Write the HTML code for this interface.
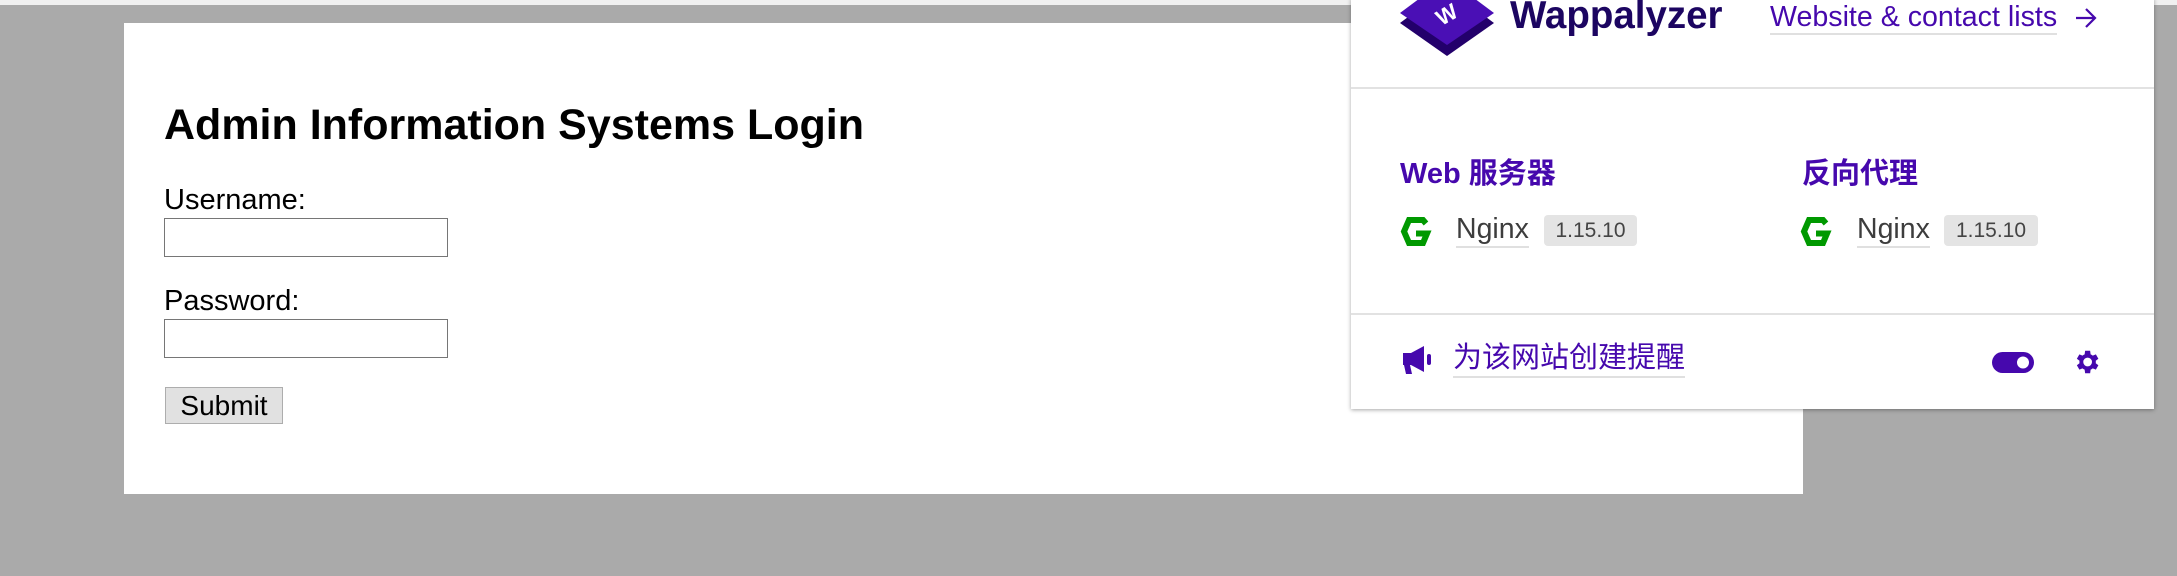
<!DOCTYPE html>
<html><head><meta charset="utf-8"><style>
body{margin:0;width:2177px;height:576px;background:#aaaaaa;position:relative;overflow:hidden;font-family:"Liberation Sans","Noto Sans CJK SC",sans-serif}
.top{position:absolute;left:0;top:0;width:2177px;height:5px;background:#f0f0f0}
.card{position:absolute;left:124px;top:23px;width:1679px;height:471px;background:#fff}
.a{position:absolute;white-space:nowrap}
h1{margin:0;position:absolute;left:164px;top:101px;font-size:43px;font-weight:bold;color:#000;white-space:nowrap}
.lbl{font-size:29px;color:#000}
.inp{position:absolute;left:164px;width:282px;height:37px;border:1px solid #767676;background:#fff}
.btn{position:absolute;left:165px;top:387px;width:116px;height:35px;border:1px solid #adadad;background:#e1e1e1;font-size:28px;text-align:center;line-height:35px}
.pop{position:absolute;left:1351px;top:-2px;width:803px;height:411px;background:#fff;box-shadow:0 1px 4px rgba(0,0,0,.35)}
.hr{position:absolute;left:1351px;width:803px;height:2px;background:#e2e2e2}
.pur{color:#4608ad}
.ul{border-bottom:2px solid #e0e0e0}
.badge{position:absolute;height:31px;background:#e4e4e4;border-radius:4px;font-size:21px;color:#444;line-height:31px;text-align:center}
</style></head><body>
<div class="top"></div>
<div class="card"></div>
<h1>Admin Information Systems Login</h1>
<div class="a lbl" style="left:164px;top:184px">Username:</div>
<div class="inp" style="top:218px"></div>
<div class="a lbl" style="left:164px;top:285px">Password:</div>
<div class="inp" style="top:319px"></div>
<div class="btn">Submit</div>

<div class="pop"></div>
<svg class="a" style="left:1398px;top:0" width="100" height="60" viewBox="1398 0 100 60">
<polygon points="1400,23 1447,-12 1494,23 1447,56" fill="#23006b"/>
<polygon points="1400,13 1447,-22 1494,13 1447,45" fill="#4a0fb5"/>
<text x="1447" y="22" font-family="Liberation Sans" font-weight="bold" font-size="22" fill="#fff" text-anchor="middle" transform="rotate(-30 1447 15)">W</text>
</svg>
<div class="a" style="left:1510px;top:-6px;font-size:38.5px;font-weight:bold;color:#1c0561">Wappalyzer</div>
<div class="a pur ul" style="left:1770px;top:2px;font-size:28.6px;line-height:31px">Website &amp; contact lists</div>
<svg class="a" style="left:2074px;top:6px" width="24" height="24" viewBox="0 0 24 24"><path d="M2 12h19M12 3l9 9-9 9" fill="none" stroke="#4608ad" stroke-width="2.2"/></svg>
<div class="hr" style="top:87px"></div>

<div class="a pur" style="left:1400px;top:150px;font-size:29px;font-weight:bold">Web 服务器</div>
<div class="a pur" style="left:1802px;top:150px;font-size:29px;font-weight:bold">反向代理</div>

<svg class="a" style="left:1400px;top:217px" width="32" height="29" viewBox="0 0 32 29"><path d="M26 6.5L23 3H9L4 14.5 9 26h14l4-9.5H16" fill="none" stroke="#009900" stroke-width="6"/></svg>
<div class="a ul" style="left:1456px;top:213px;font-size:28.5px;color:#3d3d3d;line-height:33px">Nginx</div>
<div class="badge" style="left:1544px;top:215px;width:93px">1.15.10</div>
<svg class="a" style="left:1800px;top:217px" width="32" height="29" viewBox="0 0 32 29"><path d="M26 6.5L23 3H9L4 14.5 9 26h14l4-9.5H16" fill="none" stroke="#009900" stroke-width="6"/></svg>
<div class="a ul" style="left:1857px;top:213px;font-size:28.5px;color:#3d3d3d;line-height:33px">Nginx</div>
<div class="badge" style="left:1944px;top:215px;width:94px">1.15.10</div>

<div class="hr" style="top:313px"></div>
<svg class="a" style="left:1402px;top:346px" width="30" height="28" viewBox="0 0 30 28"><path d="M1 7h8l13-7v26L9 19H8l2 9H4L2 19H1z" fill="#4608ad"/><rect x="25" y="8" width="4" height="11" rx="2" fill="#4608ad"/></svg>
<div class="a pur ul" style="left:1453px;top:341px;font-size:29px;line-height:35px">为该网站创建提醒</div>
<svg class="a" style="left:1992px;top:352px" width="42" height="21"><rect width="42" height="21" rx="10.5" fill="#4608ad"/><circle cx="31" cy="10.5" r="6" fill="#fff"/></svg>
<svg class="a" style="left:2071px;top:347px" width="31" height="30" viewBox="0 0 24 24"><path fill="#4608ad" d="M19.4 13a7.5 7.5 0 0 0 0-2l2.1-1.6-2-3.5-2.5 1a7 7 0 0 0-1.7-1L14.9 3h-4l-.4 2.9a7 7 0 0 0-1.7 1l-2.5-1-2 3.5L6.4 11a7.5 7.5 0 0 0 0 2l-2.1 1.6 2 3.5 2.5-1a7 7 0 0 0 1.7 1l.4 2.9h4l.4-2.9a7 7 0 0 0 1.7-1l2.5 1 2-3.5zM12.9 15.5a3.5 3.5 0 1 1 0-7 3.5 3.5 0 0 1 0 7z"/></svg>
</body></html>
